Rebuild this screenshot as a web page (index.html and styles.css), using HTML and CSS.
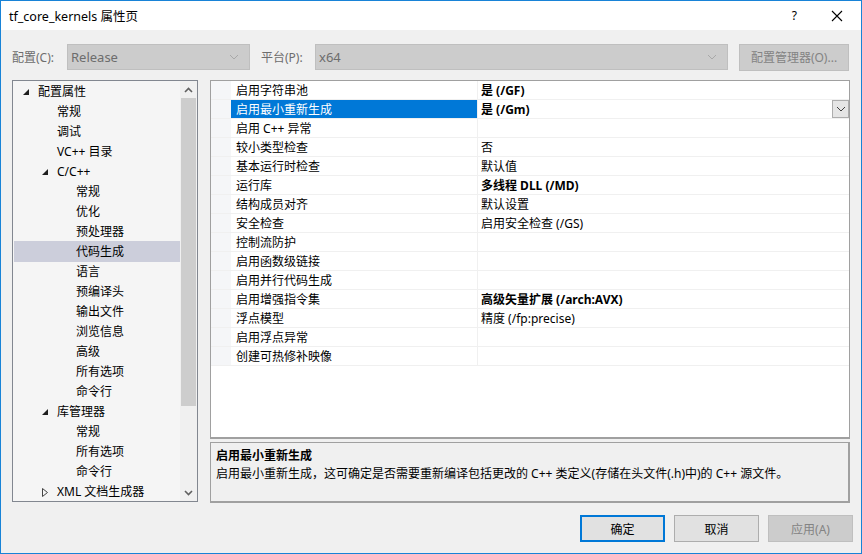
FILE: index.html
```html
<!DOCTYPE html>
<html lang="zh-CN">
<head>
    <meta charset="UTF-8">
    <title>tf_core_kernels 属性页</title>
    <link rel="stylesheet" href="styles.css">
</head>
<body>
    <div class="window">
        <div class="titlebar">
            <span class="title">tf_core_kernels 属性页</span>
            <span class="help">?</span>
            <svg class="close" width="12" height="12" viewBox="0 0 12 12"><path d="M1 1L11 11M11 1L1 11" stroke="#000" stroke-width="1.1" fill="none"/></svg>
        </div>

        <div class="content">
            <div class="toolbar">
                <span class="label">配置(C):</span>
                <div class="combo combo-config">
                    <span>Release</span>
                    <svg width="10" height="6" viewBox="0 0 10 6"><path d="M1 1L5 5L9 1" stroke="#a8a8a8" fill="none"/></svg>
                </div>
                <span class="label label-platform">平台(P):</span>
                <div class="combo combo-platform">
                    <span>x64</span>
                    <svg width="10" height="6" viewBox="0 0 10 6"><path d="M1 1L5 5L9 1" stroke="#a8a8a8" fill="none"/></svg>
                </div>
                <button class="btn btn-disabled btn-manager">配置管理器(O)...</button>
            </div>

            <div class="main">
                <div class="tree">
                    <div class="tree-items">
                        <div class="node lv0"><svg class="arrow" width="6" height="6" viewBox="0 0 6 6"><path d="M6 0L6 6L0 6Z" fill="#1e1e1e"/></svg>配置属性</div>
                        <div class="node lv1">常规</div>
                        <div class="node lv1">调试</div>
                        <div class="node lv1">VC++ 目录</div>
                        <div class="node lv1"><svg class="arrow" width="6" height="6" viewBox="0 0 6 6"><path d="M6 0L6 6L0 6Z" fill="#1e1e1e"/></svg>C/C++</div>
                        <div class="node lv2">常规</div>
                        <div class="node lv2">优化</div>
                        <div class="node lv2">预处理器</div>
                        <div class="node lv2 selected">代码生成</div>
                        <div class="node lv2">语言</div>
                        <div class="node lv2">预编译头</div>
                        <div class="node lv2">输出文件</div>
                        <div class="node lv2">浏览信息</div>
                        <div class="node lv2">高级</div>
                        <div class="node lv2">所有选项</div>
                        <div class="node lv2">命令行</div>
                        <div class="node lv1"><svg class="arrow" width="6" height="6" viewBox="0 0 6 6"><path d="M6 0L6 6L0 6Z" fill="#1e1e1e"/></svg>库管理器</div>
                        <div class="node lv2">常规</div>
                        <div class="node lv2">所有选项</div>
                        <div class="node lv2">命令行</div>
                        <div class="node lv1"><svg class="arrow arrow-closed" width="6" height="9" viewBox="0 0 6 9"><path d="M0.5 0.5L5.5 4.5L0.5 8.5Z" fill="none" stroke="#444"/></svg>XML 文档生成器</div>
                    </div>
                    <div class="scrollbar">
                        <div class="sb-btn"><svg width="9" height="6" viewBox="0 0 9 6"><path d="M1 5L4.5 1.5L8 5" stroke="#606060" stroke-width="1.6" fill="none"/></svg></div>
                        <div class="sb-track"><div class="sb-thumb"></div></div>
                        <div class="sb-btn"><svg width="9" height="6" viewBox="0 0 9 6"><path d="M1 1L4.5 4.5L8 1" stroke="#606060" stroke-width="1.6" fill="none"/></svg></div>
                    </div>
                </div>

                <div class="right">
                    <div class="grid">
                        <div class="row"><div class="gutter"></div><div class="name">启用字符串池</div><div class="value bold">是 (/GF)</div></div>
                        <div class="row active"><div class="gutter"></div><div class="name">启用最小重新生成</div><div class="value bold">是 (/Gm)<span class="drop"><svg width="10" height="6" viewBox="0 0 10 6"><path d="M1 1L5 5L9 1" stroke="#404040" fill="none"/></svg></span></div></div>
                        <div class="row"><div class="gutter"></div><div class="name">启用 C++ 异常</div><div class="value"></div></div>
                        <div class="row"><div class="gutter"></div><div class="name">较小类型检查</div><div class="value">否</div></div>
                        <div class="row"><div class="gutter"></div><div class="name">基本运行时检查</div><div class="value">默认值</div></div>
                        <div class="row"><div class="gutter"></div><div class="name">运行库</div><div class="value bold">多线程 DLL (/MD)</div></div>
                        <div class="row"><div class="gutter"></div><div class="name">结构成员对齐</div><div class="value">默认设置</div></div>
                        <div class="row"><div class="gutter"></div><div class="name">安全检查</div><div class="value">启用安全检查 (/GS)</div></div>
                        <div class="row"><div class="gutter"></div><div class="name">控制流防护</div><div class="value"></div></div>
                        <div class="row"><div class="gutter"></div><div class="name">启用函数级链接</div><div class="value"></div></div>
                        <div class="row"><div class="gutter"></div><div class="name">启用并行代码生成</div><div class="value"></div></div>
                        <div class="row"><div class="gutter"></div><div class="name">启用增强指令集</div><div class="value bold">高级矢量扩展 (/arch:AVX)</div></div>
                        <div class="row"><div class="gutter"></div><div class="name">浮点模型</div><div class="value">精度 (/fp:precise)</div></div>
                        <div class="row"><div class="gutter"></div><div class="name">启用浮点异常</div><div class="value"></div></div>
                        <div class="row"><div class="gutter"></div><div class="name">创建可热修补映像</div><div class="value"></div></div>
                    </div>
                    <div class="desc">
                        <div class="desc-title">启用最小重新生成</div>
                        <div class="desc-text">启用最小重新生成，这可确定是否需要重新编译包括更改的 C++ 类定义(存储在头文件(.h)中)的 C++ 源文件。</div>
                    </div>
                </div>
            </div>

            <div class="footer">
                <button class="btn btn-default">确定</button>
                <button class="btn">取消</button>
                <button class="btn btn-disabled">应用(A)</button>
            </div>
        </div>
    </div>
</body>
</html>
```

FILE: styles.css
```css
* {
    margin: 0;
    padding: 0;
    box-sizing: border-box;
}

body {
    font-family: "Noto Sans", "Noto Sans CJK SC", sans-serif;
    font-size: 12px;
    color: #000;
    background: #f0f0f0;
}

.window {
    width: 862px;
    height: 554px;
    border: 1px solid #1883d7;
    display: flex;
    flex-direction: column;
    background: #f0f0f0;
}

.titlebar {
    height: 29px;
    background: #fff;
    display: flex;
    align-items: center;
    padding-left: 8px;
    flex-shrink: 0;
}

.title {
    font-size: 12.5px;
    flex: 1;
}

.help {
    font-size: 12px;
    margin-right: 34px;
}

.close {
    margin-right: 18px;
}

.content {
    flex: 1;
    display: flex;
    flex-direction: column;
    padding: 14px 11px 0 11px;
}

/* barra de configuração */
.toolbar {
    display: flex;
    align-items: center;
    height: 26px;
}

.label {
    color: #6d6d6d;
    width: 55px;
}

.label-platform {
    margin-left: 11px;
    width: 54px;
}

.combo {
    height: 26px;
    background: #cccccc;
    border: 1px solid #bfbfbf;
    color: #6d6d6d;
    display: flex;
    align-items: center;
    justify-content: space-between;
    padding: 0 10px 0 3px;
    font-size: 13px;
}

.combo-config {
    width: 183px;
}

.combo-platform {
    width: 413px;
}

.btn {
    width: 85px;
    height: 27px;
    background: #e1e1e1;
    border: 1px solid #adadad;
    font-family: inherit;
    font-size: 12px;
    color: #000;
}

.btn-manager {
    width: 110px;
    margin-left: 11px;
    height: 27px;
}

.btn-disabled {
    background: #cccccc;
    border-color: #bfbfbf;
    color: #838383;
}

.btn-default {
    border: 2px solid #0078d7;
}

/* área principal */
.main {
    display: flex;
    margin-top: 10px;
    height: 423px;
}

.tree {
    width: 186px;
    height: 422px;
    border: 1px solid #828790;
    background: #f5f5f5;
    display: flex;
}

.tree-items {
    flex: 1;
    padding-left: 1px;
    padding-top: 1px;
}

.node {
    height: 20px;
    line-height: 20px;
    display: flex;
    align-items: center;
    white-space: nowrap;
}

.node.lv0 { padding-left: 24px; }
.node.lv1 { padding-left: 43px; }
.node.lv2 { padding-left: 62px; }

.node .arrow {
    margin-left: -15px;
    margin-right: 9px;
}

.node.selected {
    background: #cccedb;
    margin-top: -1px;
    padding-top: 1px;
    height: 21px;
}

.scrollbar {
    width: 17px;
    display: flex;
    flex-direction: column;
    background: #f0f0f0;
}

.sb-btn {
    height: 17px;
    display: flex;
    align-items: center;
    justify-content: center;
}

.sb-track {
    flex: 1;
}

.sb-thumb {
    margin: 0 1px;
    height: 308px;
    background: #cdcdcd;
}

.right {
    width: 640px;
    margin-left: 12px;
    display: flex;
    flex-direction: column;
}

.grid {
    height: 359px;
    border: 1px solid #a0a0a0;
    border-bottom-width: 2px;
    background: #fff;
}

.row {
    display: flex;
    height: 19px;
    border-bottom: 1px solid #f0f0f0;
}

.gutter {
    width: 20px;
    background: #f5f6f8;
}

.name {
    width: 247px;
    padding-left: 5px;
    padding-top: 1px;
    line-height: 17px;
    border-right: 1px solid #f0f0f0;
    white-space: nowrap;
}

.value {
    flex: 1;
    padding-left: 3px;
    padding-top: 1px;
    line-height: 17px;
    white-space: nowrap;
    display: flex;
}

.bold {
    font-weight: bold;
}

.row.active .name {
    background: #0078d7;
    color: #fff;
}

.drop {
    margin-left: auto;
    margin-top: -1px;
    width: 17px;
    height: 18px;
    background: #e5e5e5;
    border: 1px solid #adadad;
    display: flex;
    align-items: center;
    justify-content: center;
}

.desc {
    margin-top: 3px;
    height: 61px;
    border: 1px solid #a0a0a0;
    border-bottom-width: 2px;
    border-right-width: 2px;
    padding: 4px 5px;
}

.desc-title {
    font-weight: bold;
    line-height: 18px;
}

.desc-text {
    line-height: 18px;
    white-space: nowrap;
}

.footer {
    display: flex;
    justify-content: flex-end;
    gap: 9px;
    margin-top: 12px;
    margin-right: -3px;
}
```
